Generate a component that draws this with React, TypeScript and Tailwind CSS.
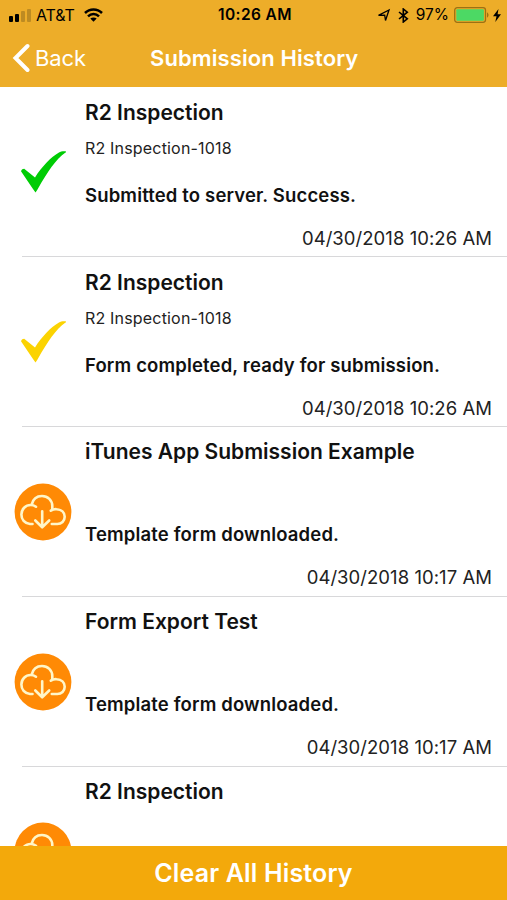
import React from "react";

type Kind = "sent" | "ready" | "download";

interface Entry {
  kind: Kind;
  title: string;
  form?: string;
  message?: string;
  date?: string;
}

const entries: Entry[] = [
  { kind: "sent", title: "R2 Inspection", form: "R2 Inspection-1018", message: "Submitted to server. Success.", date: "04/30/2018 10:26 AM" },
  { kind: "ready", title: "R2 Inspection", form: "R2 Inspection-1018", message: "Form completed, ready for submission.", date: "04/30/2018 10:26 AM" },
  { kind: "download", title: "iTunes App Submission Example", message: "Template form downloaded.", date: "04/30/2018 10:17 AM" },
  { kind: "download", title: "Form Export Test", message: "Template form downloaded.", date: "04/30/2018 10:17 AM" },
  { kind: "download", title: "R2 Inspection" },
];

function Check({ color }: { color: string }) {
  return (
    <svg className={`h-[42px] w-[46px] ${color}`} viewBox="0 0 46 42" fill="currentColor">
      <path d="M0 20.2 C.8 18.500 2 17.700 3.500 17.900 L14 26.500 C20.500 16 30 6 38 1.500 C39.500.5 42 .2 45 .4 C45.300.7 45 1.200 44.500 1.600 C35 8 26.500 21 16.500 38.500 L14.500 41.500 L12 38 Z" />
    </svg>
  );
}

function CloudDownload() {
  return (
    <svg className="h-[58px] w-[58px]" viewBox="0 0 58 58" fill="none">
      <circle cx="29" cy="29" r="28.400" fill="#ff8a05" />
      <g stroke="#fff6c8" strokeWidth="2.600" strokeLinecap="round" strokeLinejoin="round">
        <path d="M18.500 41 H16 C10.500 40.500 7.400 36.300 7.400 31.500 C7.400 26.100 11.500 22 16.700 22 C19 22 20.600 22.700 22 23.700" />
        <path d="M17.700 21.500 C19 16 23 13 28 13 C33.800 13 38.300 17.400 38.300 23 V26.500" />
        <path d="M36.800 27.700 C38.500 26.600 40.700 26 42.600 26.200 C47.500 26.500 50.700 29.700 50.700 33.700 C50.700 38 47.500 41 43.300 41 H37.800" />
        <path d="M28.200 28.300 V44 M21.300 37.500 L28.200 44.300 L35.200 37.500" />
      </g>
    </svg>
  );
}

function StatusBar() {
  return (
    <div className="flex h-[30px] items-center pl-[9px] pr-[6px] text-black">
      <div className="flex flex-1 items-center">
        <div className="flex h-[13px] items-end gap-[2px]">
          <i className="h-[6px] w-[4px] rounded-[1px] bg-black" />
          <i className="h-[8px] w-[4px] rounded-[1px] bg-black" />
          <i className="h-[11px] w-[4px] rounded-[1px] bg-[#bd8b22]" />
          <i className="h-[13px] w-[4px] rounded-[1px] bg-[#bd8b22]" />
        </div>
        <span className="ml-[5px] text-[16px] tracking-[-0.1px]">AT&amp;T</span>
        <svg className="ml-[9px] h-[14px] w-[19px]" viewBox="0 0 19 14" fill="none" stroke="black" strokeWidth="2.500">
          <path d="M1 5 C5.800.2 13.200.2 18 5" />
          <path d="M4 8.300 C7.200 5.200 11.800 5.200 15 8.300" />
          <path d="M6.300 10.600 C8 9 11 9 12.700 10.600 L9.500 13.700 Z" fill="black" stroke="none" />
        </svg>
      </div>
      <span className="text-[15.500px] font-semibold tracking-[0.4px]">10:26 AM</span>
      <div className="flex flex-1 items-center justify-end">
        <svg className="h-[14px] w-[14px]" viewBox="0 0 14 14" fill="none" stroke="black" strokeWidth="1.300" strokeLinejoin="miter">
          <path d="M1.500 7.300 L12 2 L8.500 12.500 L7.700 7.100 Z" />
        </svg>
        <svg className="ml-[7px] h-[15px] w-[11px]" viewBox="0 0 11 15" fill="none" stroke="black" strokeWidth="1.600">
          <path d="M1 4 L9.300 10.800 L5.300 14 V1 L9.300 4.200 L1 11" />
        </svg>
        <span className="ml-[7px] text-[15.500px]">97%</span>
        <svg className="ml-[5px] h-[16px] w-[36px]" viewBox="0 0 36 16" fill="none">
          <rect x=".7" y=".7" width="30.800" height="14.600" rx="2.500" stroke="#9c7114" strokeWidth="1.300" />
          <rect x="2.300" y="2.300" width="27.600" height="11.400" rx="1" fill="#4cd964" />
          <path d="M33 5.500 C35 6 35 10 33 10.500 Z" fill="#9c7114" />
        </svg>
        <svg className="ml-[3px] h-[13px] w-[8px]" viewBox="0 0 8 13" fill="black">
          <path d="M5.500 0 L0 7.300 H3.500 L2.300 13 L8 5.300 H4.600 Z" />
        </svg>
      </div>
    </div>
  );
}

function Row({ entry }: { entry: Entry }) {
  return (
    <li className="flex h-[169.800px] shrink-0 flex-col">
      <div className="flex flex-1">
        <div className="flex w-[85px] shrink-0 items-center pl-[14px] pt-px">
          {entry.kind === "download" ? (
            <CloudDownload />
          ) : (
            <div className="pl-[7px]">
              <Check color={entry.kind === "sent" ? "text-[#00cc05]" : "text-[#fbd302]"} />
            </div>
          )}
        </div>
        <div className="flex flex-1 flex-col pr-[15px] pt-[10.500px] whitespace-nowrap">
          <h2 className="h-[30px] text-[21px] leading-[30px] font-semibold">{entry.title}</h2>
          <p className="mt-[10px] h-[20px] text-[16px] leading-[20px] tracking-[0.180px] text-[#222]">{entry.form}</p>
          <p className="mt-[25px] h-[24px] text-[18.500px] leading-[24px] font-semibold tracking-[0.150px]">{entry.message}</p>
          <p className="mt-[19px] h-[24px] text-right text-[18.500px] leading-[24px] tracking-[0.050px] text-[#222]">{entry.date}</p>
        </div>
      </div>
      <div className="ml-[22px] h-px shrink-0 bg-[#d8d8da]" />
    </li>
  );
}

export default function App() {
  return (
    <main className="flex h-[900px] w-[507px] flex-col overflow-hidden bg-white font-['Inter','Liberation_Sans',sans-serif] text-[#111]">
      <header className="h-[87px] shrink-0 bg-[#edad29]">
        <StatusBar />
        <div className="flex h-[56px] items-center text-white">
          <div className="flex w-[150px] items-center pl-[12px]">
            <svg className="h-[30px] w-[18px]" viewBox="0 0 18 30" fill="none" stroke="white" strokeWidth="4" strokeLinecap="round">
              <path d="M15.500 3 L3.500 15 L15.500 27" />
            </svg>
            <span className="ml-[5px] text-[22px] tracking-[-0.1px]">Back</span>
          </div>
          <h1 className="text-[22px] font-semibold tracking-[0.1px] whitespace-nowrap">Submission History</h1>
        </div>
      </header>
      <ul className="flex min-h-0 flex-1 flex-col overflow-hidden pt-[0.400px]">
        {entries.map((entry, i) => (
          <Row key={i} entry={entry} />
        ))}
      </ul>
      <button className="h-[54px] shrink-0 bg-[#f3a90b] pt-[2px] text-center text-[25px] font-semibold tracking-[0.150px] text-white">Clear All History</button>
    </main>
  );
}
